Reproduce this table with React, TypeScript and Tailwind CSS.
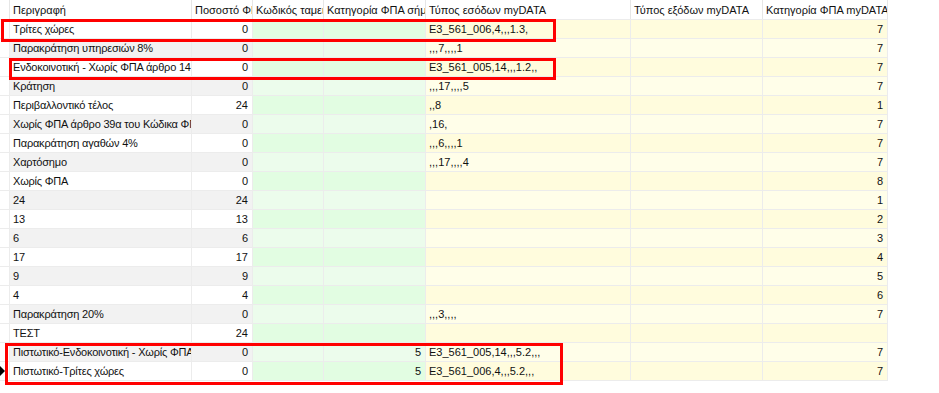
const cols = [
  { title: "", w: 10 },
  { title: "Περιγραφή", w: 182 },
  { title: "Ποσοστό ΦΠΑ", w: 61 },
  { title: "Κωδικός ταμειακής", w: 71 },
  { title: "Κατηγορία ΦΠΑ σήμανσης", w: 102 },
  { title: "Τύπος εσόδων myDATA", w: 205 },
  { title: "Τύπος εξόδων myDATA", w: 132 },
  { title: "Κατηγορία ΦΠΑ myDATA", w: 125 },
]

type Row = [string, string, string, string, string, string, string]

const rows: Row[] = [
  ["Τρίτες χώρες", "0", "", "", "E3_561_006,4,,,1.3,", "", "7"],
  ["Παρακράτηση υπηρεσιών 8%", "0", "", "", ",,,7,,,,1", "", "7"],
  ["Ενδοκοινοτική - Χωρίς ΦΠΑ άρθρο 14", "0", "", "", "E3_561_005,14,,,1.2,,", "", "7"],
  ["Κράτηση", "0", "", "", ",,,17,,,,5", "", "7"],
  ["Περιβαλλοντικό τέλος", "24", "", "", ",,8", "", "1"],
  ["Χωρίς ΦΠΑ άρθρο 39α του Κώδικα ΦΠΑ", "0", "", "", ",16,", "", "7"],
  ["Παρακράτηση αγαθών 4%", "0", "", "", ",,,6,,,,1", "", "7"],
  ["Χαρτόσημο", "0", "", "", ",,,17,,,,4", "", "7"],
  ["Χωρίς ΦΠΑ", "0", "", "", "", "", "8"],
  ["24", "24", "", "", "", "", "1"],
  ["13", "13", "", "", "", "", "2"],
  ["6", "6", "", "", "", "", "3"],
  ["17", "17", "", "", "", "", "4"],
  ["9", "9", "", "", "", "", "5"],
  ["4", "4", "", "", "", "", "6"],
  ["Παρακράτηση 20%", "0", "", "", ",,,3,,,,", "", "7"],
  ["ΤΕΣΤ", "24", "", "", "", "", ""],
  ["Πιστωτικό-Ενδοκοινοτική - Χωρίς ΦΠΑ", "0", "", "5", "E3_561_005,14,,,5.2,,,", "", "7"],
  ["Πιστωτικό-Τρίτες χώρες", "0", "", "5", "E3_561_006,4,,,5.2,,,", "", "7"],
]

// columns with right-aligned values (index into a row)
const rightCols = [1, 3, 6]

function cellBg(col: number, odd: boolean) {
  if (col <= 2) return odd ? "bg-[#f2f2f2]" : "bg-white"
  if (col <= 4) return odd ? "bg-[#ecfcec]" : "bg-[#e2fde2]"
  return odd ? "bg-[#fffee9]" : "bg-[#fffcdd]"
}

export default function App() {
  return (
    <div className="relative w-[939px] h-[393px] bg-white overflow-hidden font-['Liberation_Sans',Arial,sans-serif] text-[11px] text-[#111]">
      <div className="flex flex-col w-[888px]">
        <div className="flex h-[19px] bg-white">
          {cols.map((c, i) => (
            <div
              key={i}
              style={{ width: c.w }}
              className="shrink-0 h-full border-r border-[#e6e6e6] pl-[3px] overflow-hidden whitespace-nowrap leading-[20px]"
            >
              {c.title}
            </div>
          ))}
        </div>
        {rows.map((r, ri) => {
          const odd = ri % 2 === 1
          return (
            <div key={ri} className="flex h-[19px]">
              <div className="w-[10px] shrink-0 h-full border-r border-t border-[#ececec] relative bg-white">
                {ri === rows.length - 1 && (
                  <span className="absolute left-0 top-[4px] w-0 h-0 border-y-[5px] border-y-transparent border-l-[5px] border-l-black" />
                )}
              </div>
              {r.map((v, ci) => (
                <div
                  key={ci}
                  style={{ width: cols[ci + 1].w }}
                  className={`shrink-0 h-full border-r border-t border-[#ececec] overflow-hidden whitespace-nowrap leading-[19px] ${cellBg(ci + 1, odd)} ${
                    rightCols.includes(ci) ? "text-right pr-[4px]" : "pl-[3px]"
                  } ${ci === 0 ? "tracking-[-0.2px]" : ""}`}
                >
                  {v}
                </div>
              ))}
            </div>
          )
        })}
        <div className="h-px bg-[#ececec]" />
      </div>

      <div className="absolute left-[1px] top-[19px] w-[555px] h-[23px] border-[3px] border-[#ff0000]" />
      <div className="absolute left-[9px] top-[58px] w-[547px] h-[22px] border-[3px] border-[#ff0000]" />
      <div className="absolute left-[5px] top-[343px] w-[558px] h-[42px] border-[3px] border-[#ff0000]" />
    </div>
  )
}
